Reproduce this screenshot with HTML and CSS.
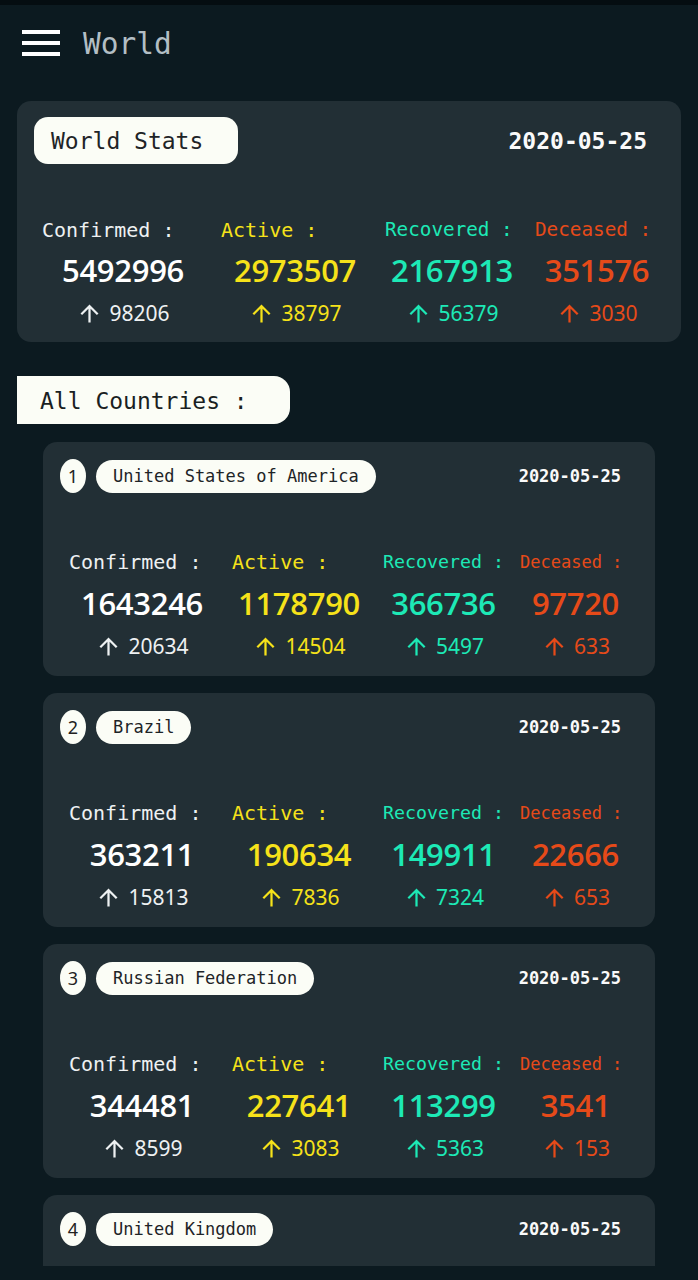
FILE: index.html
```html
<!DOCTYPE html>
<html lang="en">
<head>
<meta charset="utf-8">
<title>World</title>
<link rel="stylesheet" href="styles.css">
</head>
<body>
<div class="page">
  <div class="statusbar"></div>
  <header class="appbar">
    <div class="burger"><span></span><span></span><span></span></div>
    <h1 class="title">World</h1>
  </header>

  <section class="card world">
    <div class="head">
      <div class="pill big">World Stats</div>
      <div class="date">2020-05-25</div>
    </div>
    <div class="stats">
      <div class="col c1"><div class="lbl">Confirmed :</div><div class="num">5492996</div><div class="delta"><svg viewBox="0 0 24 24"><path d="M4 12l1.41 1.41L11 7.83V20h2V7.83l5.58 5.59L20 12l-8-8-8 8z"/></svg><span>98206</span></div></div>
      <div class="col c2"><div class="lbl">Active :</div><div class="num">2973507</div><div class="delta"><svg viewBox="0 0 24 24"><path d="M4 12l1.41 1.41L11 7.83V20h2V7.83l5.58 5.59L20 12l-8-8-8 8z"/></svg><span>38797</span></div></div>
      <div class="col c3"><div class="lbl">Recovered :</div><div class="num">2167913</div><div class="delta"><svg viewBox="0 0 24 24"><path d="M4 12l1.41 1.41L11 7.83V20h2V7.83l5.58 5.59L20 12l-8-8-8 8z"/></svg><span>56379</span></div></div>
      <div class="col c4"><div class="lbl">Deceased :</div><div class="num">351576</div><div class="delta"><svg viewBox="0 0 24 24"><path d="M4 12l1.41 1.41L11 7.83V20h2V7.83l5.58 5.59L20 12l-8-8-8 8z"/></svg><span>3030</span></div></div>
    </div>
  </section>

  <div class="section-pill">All Countries :</div>

  <div class="list">
    <section class="card country">
      <div class="head">
        <div class="left"><div class="rank">1</div><div class="pill name">United States of America</div></div>
        <div class="date">2020-05-25</div>
      </div>
      <div class="stats">
        <div class="col c1"><div class="lbl">Confirmed :</div><div class="num">1643246</div><div class="delta"><svg viewBox="0 0 24 24"><path d="M4 12l1.41 1.41L11 7.83V20h2V7.83l5.58 5.59L20 12l-8-8-8 8z"/></svg><span>20634</span></div></div>
        <div class="col c2"><div class="lbl">Active :</div><div class="num">1178790</div><div class="delta"><svg viewBox="0 0 24 24"><path d="M4 12l1.41 1.41L11 7.83V20h2V7.83l5.58 5.59L20 12l-8-8-8 8z"/></svg><span>14504</span></div></div>
        <div class="col c3"><div class="lbl">Recovered :</div><div class="num">366736</div><div class="delta"><svg viewBox="0 0 24 24"><path d="M4 12l1.41 1.41L11 7.83V20h2V7.83l5.58 5.59L20 12l-8-8-8 8z"/></svg><span>5497</span></div></div>
        <div class="col c4"><div class="lbl">Deceased :</div><div class="num">97720</div><div class="delta"><svg viewBox="0 0 24 24"><path d="M4 12l1.41 1.41L11 7.83V20h2V7.83l5.58 5.59L20 12l-8-8-8 8z"/></svg><span>633</span></div></div>
      </div>
    </section>

    <section class="card country">
      <div class="head">
        <div class="left"><div class="rank">2</div><div class="pill name">Brazil</div></div>
        <div class="date">2020-05-25</div>
      </div>
      <div class="stats">
        <div class="col c1"><div class="lbl">Confirmed :</div><div class="num">363211</div><div class="delta"><svg viewBox="0 0 24 24"><path d="M4 12l1.41 1.41L11 7.83V20h2V7.83l5.58 5.59L20 12l-8-8-8 8z"/></svg><span>15813</span></div></div>
        <div class="col c2"><div class="lbl">Active :</div><div class="num">190634</div><div class="delta"><svg viewBox="0 0 24 24"><path d="M4 12l1.41 1.41L11 7.83V20h2V7.83l5.58 5.59L20 12l-8-8-8 8z"/></svg><span>7836</span></div></div>
        <div class="col c3"><div class="lbl">Recovered :</div><div class="num">149911</div><div class="delta"><svg viewBox="0 0 24 24"><path d="M4 12l1.41 1.41L11 7.83V20h2V7.83l5.58 5.59L20 12l-8-8-8 8z"/></svg><span>7324</span></div></div>
        <div class="col c4"><div class="lbl">Deceased :</div><div class="num">22666</div><div class="delta"><svg viewBox="0 0 24 24"><path d="M4 12l1.41 1.41L11 7.83V20h2V7.83l5.58 5.59L20 12l-8-8-8 8z"/></svg><span>653</span></div></div>
      </div>
    </section>

    <section class="card country">
      <div class="head">
        <div class="left"><div class="rank">3</div><div class="pill name">Russian Federation</div></div>
        <div class="date">2020-05-25</div>
      </div>
      <div class="stats">
        <div class="col c1"><div class="lbl">Confirmed :</div><div class="num">344481</div><div class="delta"><svg viewBox="0 0 24 24"><path d="M4 12l1.41 1.41L11 7.83V20h2V7.83l5.58 5.59L20 12l-8-8-8 8z"/></svg><span>8599</span></div></div>
        <div class="col c2"><div class="lbl">Active :</div><div class="num">227641</div><div class="delta"><svg viewBox="0 0 24 24"><path d="M4 12l1.41 1.41L11 7.83V20h2V7.83l5.58 5.59L20 12l-8-8-8 8z"/></svg><span>3083</span></div></div>
        <div class="col c3"><div class="lbl">Recovered :</div><div class="num">113299</div><div class="delta"><svg viewBox="0 0 24 24"><path d="M4 12l1.41 1.41L11 7.83V20h2V7.83l5.58 5.59L20 12l-8-8-8 8z"/></svg><span>5363</span></div></div>
        <div class="col c4"><div class="lbl">Deceased :</div><div class="num">3541</div><div class="delta"><svg viewBox="0 0 24 24"><path d="M4 12l1.41 1.41L11 7.83V20h2V7.83l5.58 5.59L20 12l-8-8-8 8z"/></svg><span>153</span></div></div>
      </div>
    </section>

    <section class="card country partial">
      <div class="head">
        <div class="left"><div class="rank">4</div><div class="pill name">United Kingdom</div></div>
        <div class="date">2020-05-25</div>
      </div>
    </section>
  </div>
</div>
</body>
</html>
```

FILE: styles.css
```css
* { box-sizing: border-box; }
html, body { margin: 0; padding: 0; background: #0c1a20; }
body { font-family: "DejaVu Sans Mono", monospace; color: #fafafa; }

.page { height: 1266px; overflow: hidden; background: #0c1a20; }

.statusbar { height: 5px; background: #050d11; }

.appbar { height: 76px; display: flex; align-items: center; padding-left: 22px; }
.burger { width: 38px; height: 26px; display: flex; flex-direction: column; justify-content: space-between; }
.burger span { display: block; height: 4px; background: #ffffff; }
.title { margin: 2px 0 0 23px; font-weight: normal; font-size: 29.5px; line-height: 36px; color: #b3bec4; font-family: "DejaVu Sans Mono", monospace; }

.card { background: #222f35; border-radius: 14px; }

.pill { background: #fbfdf6; color: #1e2427; white-space: nowrap; font-family: "DejaVu Sans Mono", monospace; }

.date { font-family: "DejaVu Sans Mono", monospace; font-weight: bold; color: #fafafa; white-space: nowrap; }

/* World card */
.world { margin: 20px 17px 0 17px; padding: 16px 10px 15px 20px; }
.world .head { display: flex; justify-content: space-between; align-items: center; padding-right: 24px; margin-left: -3px; }
.pill.big { height: 47px; line-height: 48px; padding: 0 35px 0 17px; border-radius: 14px; font-size: 23px; }
.world .date { font-size: 23px; }
.world .stats { margin-top: 54px; }

.stats { display: flex; }
.col { display: flex; flex-direction: column; align-items: center; min-width: 0; }
.lbl { align-self: stretch; white-space: nowrap; line-height: 24px; font-family: "DejaVu Sans Mono", monospace; }
.num { font-family: "Open Sans", "Noto Sans", sans-serif; font-weight: 600; font-size: 31px; line-height: 40px; margin-top: 8px; white-space: nowrap; letter-spacing: -0.3px; }
.delta { display: flex; align-items: center; height: 28px; margin-top: 9px; white-space: nowrap; }
.delta svg { width: 27px; height: 27px; fill: currentColor; }
.delta span { font-family: "Noto Sans", sans-serif; font-size: 21px; margin-left: 6px; line-height: 28px; }

.c1 { color: #eef1f2; }
.c1 .num { color: #ffffff; }
.c2 { color: #f6e21a; }
.c3 { color: #1de9b6; }
.c4 { color: #e64a19; }

.world .c1 { width: 172px; }
.world .c2 { width: 172px; }
.world .c3 { width: 142px; }
.world .c4 { width: 148px; }
.world .c1 .lbl { padding-left: 5px; font-size: 20px; }
.world .c2 .lbl { padding-left: 12px; font-size: 20px; }
.world .c3 .lbl { padding-left: 4px; font-size: 19.3px; }
.world .c4 .lbl { padding-left: 12px; font-size: 19.3px; }

/* Section pill */
.section-pill { display: inline-block; margin: 34px 0 0 17px; height: 48px; line-height: 50px; padding: 0 42px 0 23px; background: #fbfdf6; color: #1a1f22; font-size: 23px; border-radius: 0 16px 16px 0; font-family: "DejaVu Sans Mono", monospace; white-space: nowrap; }

/* Country list */
.list { display: flex; flex-direction: column; gap: 17px; margin: 18px 43px 0 43px; }
.country { padding: 17px 14px 16px 20px; }
.country.partial { min-height: 234px; }
.country .head { display: flex; justify-content: space-between; align-items: center; height: 34px; padding-right: 20px; margin-left: -3px; }
.country .left { display: flex; align-items: center; }
.rank { width: 26px; height: 34px; border-radius: 50%; background: #fbfdf6; color: #222; font-family: "Noto Sans", sans-serif; font-size: 18px; line-height: 34px; text-align: center; }
.pill.name { margin-left: 10px; height: 33px; line-height: 33px; padding: 0 17px; border-radius: 17px; font-size: 17px; }
.country .date { font-size: 17px; }
.country .stats { margin-top: 57px; }

.country .c1 { width: 158px; }
.country .c2 { width: 156px; }
.country .c3 { width: 133px; }
.country .c4 { width: 131px; }
.country .c1 .lbl { padding-left: 6px; font-size: 20px; }
.country .c2 .lbl { padding-left: 11px; font-size: 20px; }
.country .c3 .lbl { padding-left: 6px; font-size: 18.3px; }
.country .c4 .lbl { padding-left: 10px; font-size: 17px; }
.country .num { margin-top: 9px; }
.country .delta { margin-top: 9px; }
```
